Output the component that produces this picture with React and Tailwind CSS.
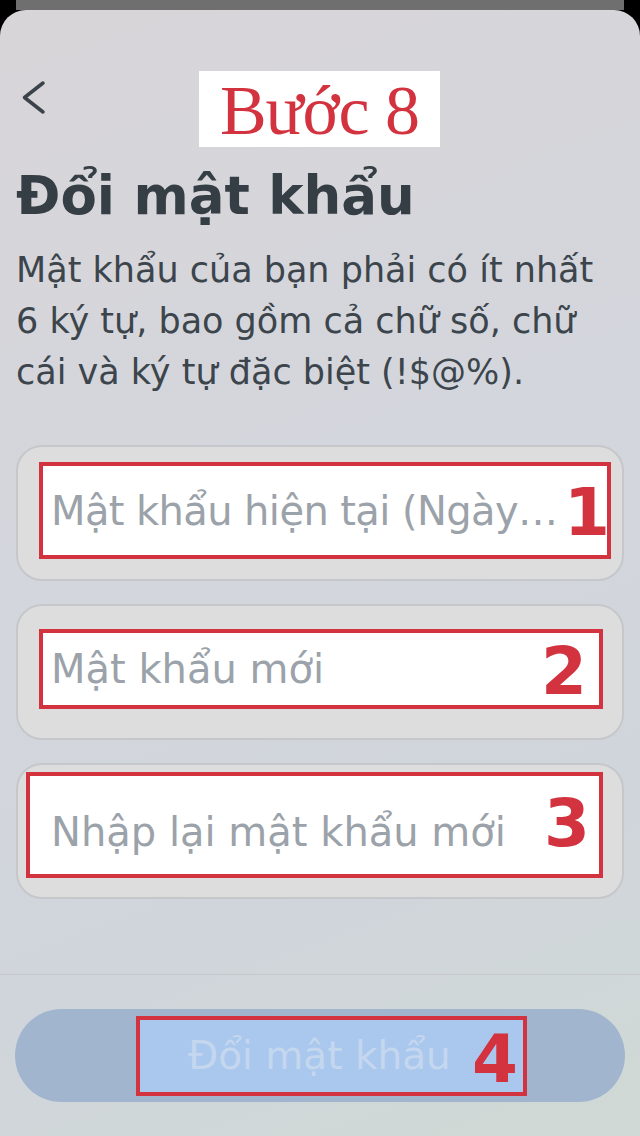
import React from 'react';

const sans = { fontFamily: '"DejaVu Sans", "Noto Sans", sans-serif' };
const digits = { fontFamily: '"DejaVu Sans", sans-serif' };

function Field({ label, num, box, numClass, labelClass = '' }) {
  return (
    <div className="h-[136px] rounded-[26px] border-2 border-[#c5c7cb] bg-[#dddddd] flex flex-col">
      <div className={`flex items-center border-[4px] border-[#d3323f] bg-white ${box}`}>
        <span className={`flex-1 whitespace-nowrap text-[40px] leading-[48px] text-[#9ba2a9] ${labelClass}`} style={sans}>
          {label}
        </span>
        <span className={`text-[66px] leading-[66px] font-bold text-[#d3323f] ${numClass}`} style={digits}>
          {num}
        </span>
      </div>
    </div>
  );
}

export default function App() {
  return (
    <div className="w-[640px] h-[1136px] bg-black overflow-hidden flex flex-col">
      <div className="mx-[16px] h-[10px] bg-[#6f6f6f] shrink-0" />
      <div className="h-[1126px] rounded-t-[26px] bg-[linear-gradient(160deg,#d8d5d8_0%,#d3d6dd_45%,#d0d5db_75%,#d0d9d5_100%)] flex flex-col">
        {/* header */}
        <div className="flex items-start mt-[61px] px-4 h-[76px]">
          <svg width="40" height="40" viewBox="0 0 40 40" className="mt-[9px]" fill="none">
            <path d="M27 3 L8.5 17.5 L27 32" stroke="#3a434a" strokeWidth="3.5" strokeLinecap="round" strokeLinejoin="round" />
          </svg>
          <div className="ml-[143px] w-[241px] h-[76px] bg-white flex items-center justify-center">
            <span className="text-[70px] leading-none text-[#d3323f] pt-[4px] tracking-[-1px]" style={{ fontFamily: '"Liberation Serif", serif' }}>
              Bước 8
            </span>
          </div>
        </div>

        <div className="px-4" style={sans}>
          <h1 className="mt-[19px] text-[53px] leading-[60px] font-bold text-[#353e45]">
            Đổi mật khẩu
          </h1>
          <p className="mt-[19px] text-[35px] leading-[51px] text-[#3c454c]">
            Mật khẩu của bạn phải có ít nhất
            <br />
            6 ký tự, bao gồm cả chữ số, chữ
            <br />
            cái và ký tự đặc biệt (!$@%).
          </p>

          <div className="mt-[47px] flex flex-col gap-[23px]">
            <Field
              label="Mật khẩu hiện tại (Ngày…"
              num="1"
              box="mt-[15px] ml-[21px] mr-[11px] h-[97px] pl-[8px]"
              labelClass="text-[39px] tracking-[-0.6px]"
              numClass="-mr-[3px] pt-[4px]"
            />
            <Field
              label="Mật khẩu mới"
              num="2"
              box="mt-[23px] ml-[21px] mr-[19px] h-[80px] pl-[8px]"
              numClass="pr-[12px] pt-[6px]"
            />
            <Field
              label="Nhập lại mật khẩu mới"
              num="3"
              box="mt-[7px] ml-[8px] mr-[19px] h-[106px] pl-[21px] pt-[14px]"
              numClass="pr-[9px] -mt-[16px]"
            />
          </div>
        </div>

        <div className="mt-[75px] h-[1px] bg-[#c6c8cc]" />

        <div className="mx-[15px] mt-[34px] h-[93px] rounded-full bg-[#a1b5cf] flex items-center">
          <div className="ml-[121px] w-[391px] h-[80px] border-[4px] border-[#d3323f] bg-[#aac8ed] flex items-center" style={sans}>
            <span className="ml-[48px] text-[39px] leading-none text-[#c4d7ef]">Đổi mật khẩu</span>
            <span className="ml-auto mr-[5px] mt-[8px] text-[66px] leading-none font-bold text-[#d3323f]" style={digits}>
              4
            </span>
          </div>
        </div>
      </div>
    </div>
  );
}
